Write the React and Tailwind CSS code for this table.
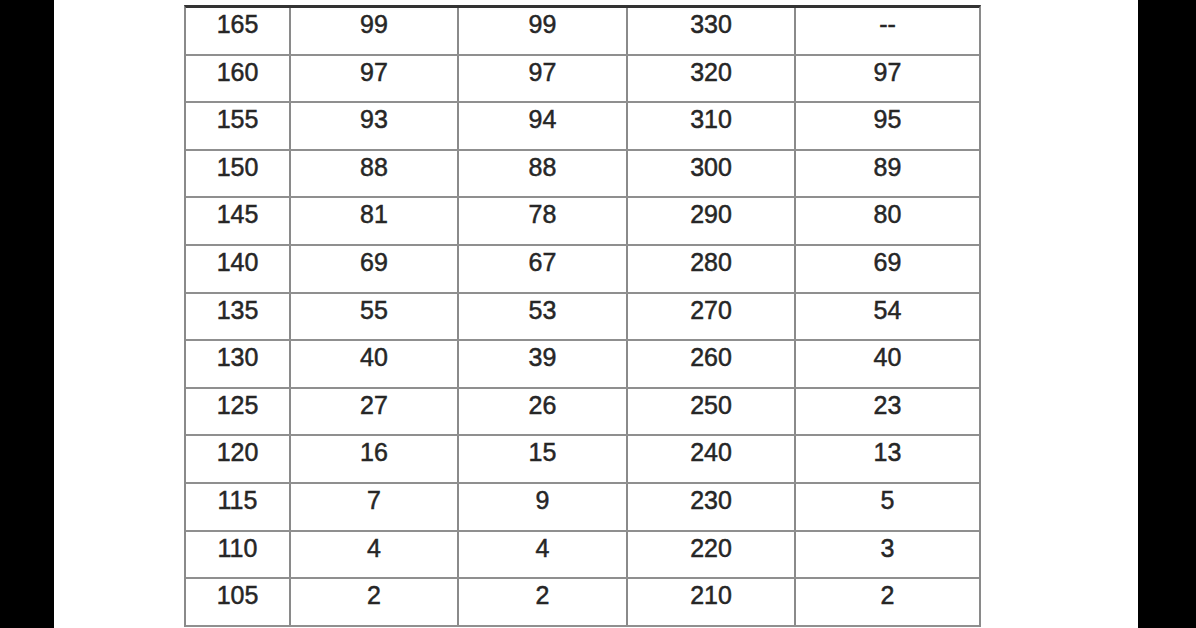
import React from "react";

const rows = [
  ["165", "99", "99", "330", "--"],
  ["160", "97", "97", "320", "97"],
  ["155", "93", "94", "310", "95"],
  ["150", "88", "88", "300", "89"],
  ["145", "81", "78", "290", "80"],
  ["140", "69", "67", "280", "69"],
  ["135", "55", "53", "270", "54"],
  ["130", "40", "39", "260", "40"],
  ["125", "27", "26", "250", "23"],
  ["120", "16", "15", "240", "13"],
  ["115", "7", "9", "230", "5"],
  ["110", "4", "4", "220", "3"],
  ["105", "2", "2", "210", "2"],
];

export default function App() {
  return (
    <div className="flex w-[1196px] h-[628px] overflow-hidden bg-black">
      <div className="w-[54px] shrink-0 bg-black" />
      <div className="w-[1084px] shrink-0 bg-white pl-[130px] pt-[5px]">
        <div
          className="w-[797px] border-t-[3px] border-t-[#333333] border-x-2 border-x-[#8a8a8a] text-[#262626] text-[25px] leading-[25px] [-webkit-text-stroke:0.5px_#262626]"
          style={{ fontFamily: '"Liberation Sans", Arial, sans-serif' }}
        >
          {rows.map((r, i) => (
            <div
              key={i}
              className="grid grid-cols-[103px_168px_169px_168px_185px] h-[47.6px] border-b-2 border-b-[#8f8f8f]"
            >
              {r.map((c, j) => (
                <div
                  key={j}
                  className={
                    "flex justify-center items-start pt-[4px] " +
                    (j > 0 ? "border-l-2 border-l-[#8a8a8a]" : "")
                  }
                >
                  {c}
                </div>
              ))}
            </div>
          ))}
        </div>
      </div>
      <div className="flex-1 bg-black" />
    </div>
  );
}
